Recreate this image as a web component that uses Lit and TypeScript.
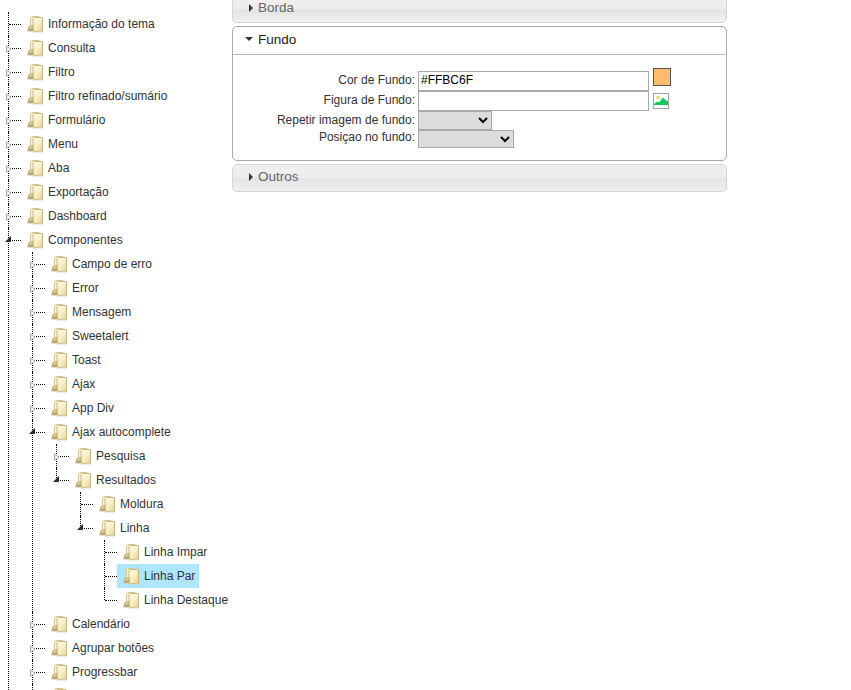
import { LitElement, html, css, svg } from "lit";
import { customElement } from "lit/decorators.js";

type Node = { t: string; open?: boolean; sel?: boolean; leaf?: boolean; c?: Node[] };

const n = (t: string): Node => ({ t });
const tree: Node[] = [
  { t: "Informação do tema", leaf: true },
  n("Consulta"), n("Filtro"), n("Filtro refinado/sumário"), n("Formulário"), n("Menu"), n("Aba"), n("Exportação"), n("Dashboard"),
  { t: "Componentes", open: true, c: [
    n("Campo de erro"), n("Error"), n("Mensagem"), n("Sweetalert"), n("Toast"), n("Ajax"), n("App Div"),
    { t: "Ajax autocomplete", open: true, c: [
      n("Pesquisa"),
      { t: "Resultados", open: true, c: [
        { t: "Moldura", leaf: true },
        { t: "Linha", open: true, c: [
          { t: "Linha Impar", leaf: true },
          { t: "Linha Par", leaf: true, sel: true },
          { t: "Linha Destaque", leaf: true },
        ]},
      ]},
    ]},
    n("Calendário"), n("Agrupar botões"), n("Progressbar"), n(""), n(""),
  ]},
  n(""),
];

const folder = svg`<svg class="folder" width="17" height="17" viewBox="0 0 17 17">
  <defs>
    <linearGradient id="fb" x1="0" y1="0" x2="1" y2="1"><stop offset="0" stop-color="#fffdf2"/><stop offset=".55" stop-color="#f8edc0"/><stop offset="1" stop-color="#e6d18c"/></linearGradient>
    <linearGradient id="ff" x1="0" y1="0" x2="0" y2="1"><stop offset="0" stop-color="#f1e4b0"/><stop offset="1" stop-color="#bb9c60"/></linearGradient>
  </defs>
  <ellipse cx="2.6" cy="14.4" rx="2.6" ry="1.5" fill="#d4d4d4"/>
  <path d="M3.5 14.5 L3.5 1.5 L4.5 .5 L12 .5 L12.5 1 L12.5 14.5 Z" fill="#faf3d4" stroke="#d6c694"/>
  <path d="M6 15.8 L6 2.2 L7 1.5 L15 1.5 L15.5 2 L15.5 15.8 Z" fill="url(#fb)" stroke="#c9b67c"/>
  <path d="M1.5 14.5 L1.5 11 L3 9.8 L6 9.8 L6 14.5 Z" fill="url(#ff)" stroke="#b9a268" stroke-width=".8"/>
</svg>`;

const closedArrow = svg`<svg class="tog closed" width="6" height="8" viewBox="0 0 6 8"><path d="M.5 .5 L5 4 L.5 7.5 Z" fill="#f2f2f2" stroke="#b0b0b0"/></svg>`;
const openArrow = svg`<svg class="tog open" width="6" height="6" viewBox="0 0 6 6"><path d="M6 0 L6 6 L0 6 Z" fill="#2a2a2a"/></svg>`;

@customElement("app-root")
export class AppRoot extends LitElement {
  static styles = css`
    :host { display: block; height: 690px; overflow: hidden; font-family: "Liberation Sans", Arial, sans-serif; font-size: 12px; color: #333; background: #fff; }
    .page { display: flex; align-items: flex-start; }
    .tree { width: 232px; flex: none; padding-top: 12px; }
    ul { list-style: none; margin: 0; padding: 0; }
    ul ul { padding-left: 24px; }
    li { position: relative; }
    li::before { content: ""; position: absolute; left: 8px; top: 0; bottom: 0; border-left: 1px dotted #000; }
    li:last-child::before { bottom: auto; height: 12px; }
    .row { position: relative; height: 24px; display: flex; align-items: center; }
    .row::before { content: ""; position: absolute; left: 9px; top: 12px; width: 12px; border-top: 1px dotted #000; }
    .tog { position: absolute; z-index: 1; }
    .tog.closed { left: 6px; top: 9px; }
    .tog.open { left: 5px; top: 8px; }
    .item { margin-left: 21px; display: flex; align-items: center; height: 24px; padding: 0 4px 0 6px; white-space: nowrap; position: relative; }
    .item.sel { background: #b0e5ff; }
    .folder { flex: none; margin-right: 4px; }
    .main { width: 495px; flex: none; margin-top: -5px; display: flex; flex-direction: column; gap: 3px; }
    .panel { border: 1px solid #c8c8c8; border-radius: 5px; background: #fff; }
    .panel.shut { height: 26px; border-color: #d4d4d4; background: linear-gradient(#f0f0f0 0, #ececec 50%, #e3e3e3 50%, #f0f0f0 100%); }
    .head { display: flex; align-items: center; padding-left: 12px; gap: 5px; font-size: 13.5px; color: #666; }
    .shut .head { height: 23px; }
    .panel.exp { border-color: #aaa; }
    .exp .head { height: 28px; box-sizing: border-box; padding-bottom: 3px; border-bottom: 1px solid #bbb; color: #222; }
    .ar-r { width: 0; height: 0; border-left: 4px solid #333; border-top: 4px solid transparent; border-bottom: 4px solid transparent; margin-left: 4px; }
    .ar-d { width: 0; height: 0; border-top: 4px solid #333; border-left: 4px solid transparent; border-right: 4px solid transparent; }
    .body { padding: 16px 0 12px; display: grid; grid-template-columns: 182px 1fr; column-gap: 3px; align-items: center; }
    label { text-align: right; color: #333; padding-bottom: 2px; box-sizing: border-box; }
    .ctrl { display: flex; align-items: center; }
    input { box-sizing: border-box; width: 231px; height: 20px; border: 1px solid #a9a9a9; padding: 0 2px 2px; margin: 0; font: 12px "Liberation Sans", Arial, sans-serif; color: #000; border-radius: 0; outline: 0; background: #fff; }
    select { box-sizing: border-box; height: 19px; margin: 0; padding: 0; border: 1px solid #a9a9a9; background-color: #dcdcdc; border-radius: 0; font: 12px "Liberation Sans", Arial, sans-serif; }
    .s1 { width: 74px; }
    .s2 { width: 96px; height: 18px; }
    .r1 { height: 20px; line-height: 18px; }
    .r2 { height: 20px; line-height: 18px; }
    .r3 { height: 19px; line-height: 18px; }
    .r4 { height: 18px; line-height: 15px; }
    .swatch { box-sizing: border-box; width: 18px; height: 18px; background: #ffbc6f; border: 1px solid #555; margin-left: 4px; align-self: flex-start; margin-top: -3px; }
    .pic { margin-left: 4px; flex: none; }
  `;

  private renderNode(node: Node): unknown {
    const arrow = node.leaf ? "" : node.open ? openArrow : closedArrow;
    return html`<li>
      <div class="row">${arrow}<div class="item ${node.sel ? "sel" : ""}">${folder}<span>${node.t}</span></div></div>
      ${node.c ? html`<ul>${node.c.map((c) => this.renderNode(c))}</ul>` : ""}
    </li>`;
  }

  render() {
    return html`<div class="page">
      <div class="tree"><ul>${tree.map((x) => this.renderNode(x))}</ul></div>
      <div class="main">
        <div class="panel shut"><div class="head"><i class="ar-r"></i>Borda</div></div>
        <div class="panel exp">
          <div class="head"><i class="ar-d"></i>Fundo</div>
          <div class="body">
            <label class="r1">Cor de Fundo:</label>
            <div class="ctrl r1"><input value="#FFBC6F" /><span class="swatch"></span></div>
            <label class="r2">Figura de Fundo:</label>
            <div class="ctrl r2"><input />
              <svg class="pic" width="16" height="16" viewBox="0 0 16 16">
                <rect x=".5" y=".5" width="15" height="15" fill="#fff" stroke="#98a4b0"/>
                <circle cx="5" cy="4.5" r="2" fill="#e8dc8c"/>
                <path d="M1 12 L1 11 L4 8.5 L6 9.5 L10 4.5 L13 7.5 L15 8 L15 12 Z" fill="#12c95a"/>
              </svg></div>
            <label class="r3">Repetir imagem de fundo:</label>
            <div class="ctrl r3"><select class="s1"></select></div>
            <label class="r4">Posiçao no fundo:</label>
            <div class="ctrl r4"><select class="s2"></select></div>
          </div>
        </div>
        <div class="panel shut"><div class="head"><i class="ar-r"></i>Outros</div></div>
      </div>
    </div>`;
  }
}
